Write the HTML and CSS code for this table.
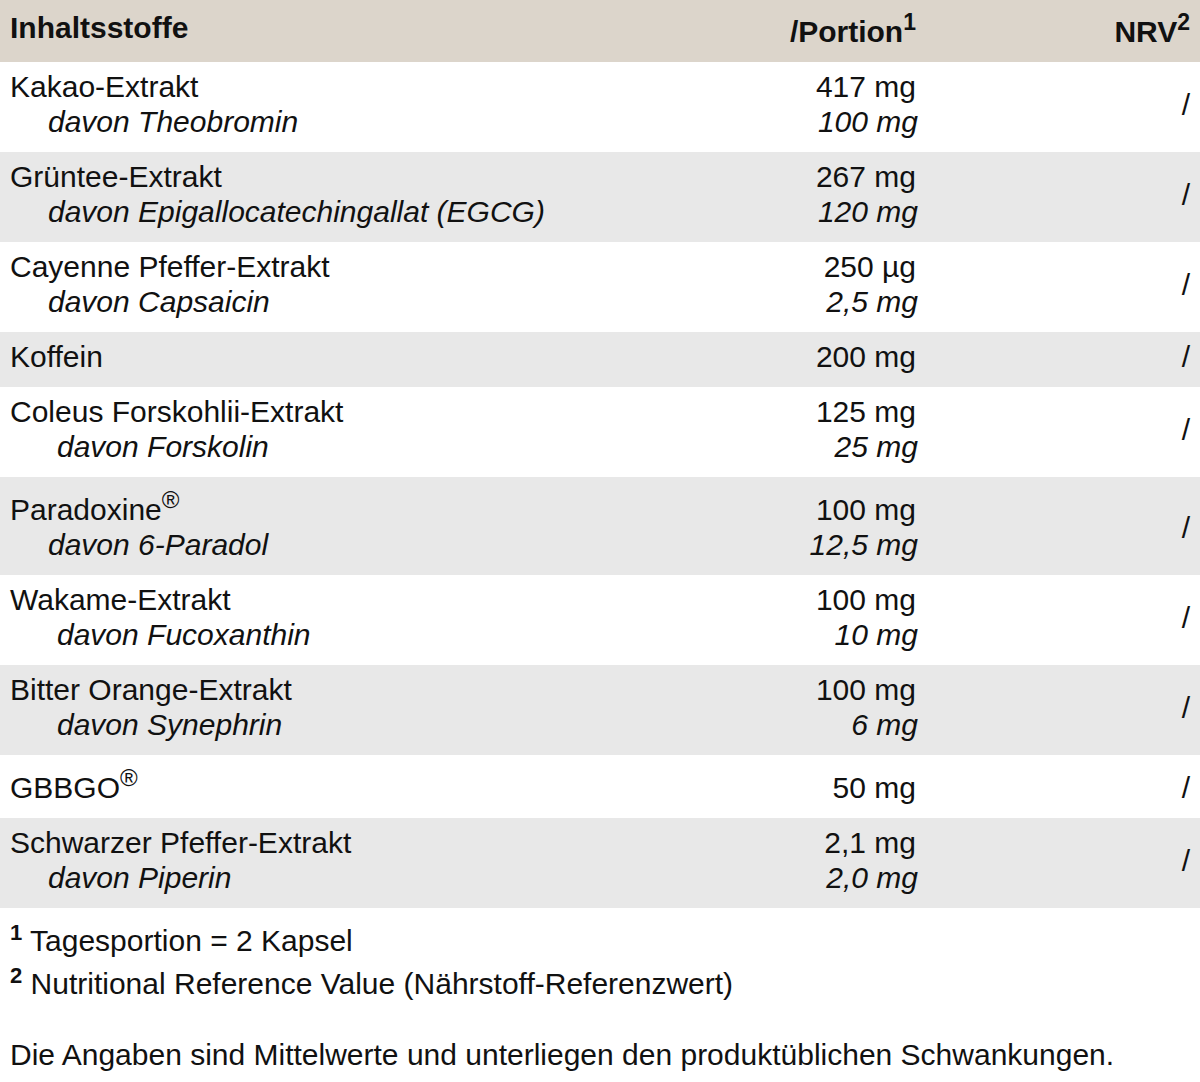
FILE: index.html
```html
<!DOCTYPE html>
<html lang="de">
<head>
<meta charset="utf-8">
<title>Inhaltsstoffe</title>
<link rel="stylesheet" href="styles.css">
</head>
<body>
<div class="table">
  <div class="row head">
    <div class="c name">Inhaltsstoffe</div>
    <div class="c val">/Portion<sup class="hs">1</sup></div>
    <div class="c nrv">NRV<sup class="hs">2</sup></div>
  </div>
  <div class="row">
    <div class="c name">Kakao-Extrakt<span class="sub i48">davon Theobromin</span></div>
    <div class="c val">417 mg<span class="sub">100 mg</span></div>
    <div class="c nrv">/</div>
  </div>
  <div class="row alt">
    <div class="c name">Grüntee-Extrakt<span class="sub i48">davon Epigallocatechingallat (EGCG)</span></div>
    <div class="c val">267 mg<span class="sub">120 mg</span></div>
    <div class="c nrv">/</div>
  </div>
  <div class="row">
    <div class="c name">Cayenne Pfeffer-Extrakt<span class="sub i48">davon Capsaicin</span></div>
    <div class="c val">250 µg<span class="sub">2,5 mg</span></div>
    <div class="c nrv">/</div>
  </div>
  <div class="row alt">
    <div class="c name">Koffein</div>
    <div class="c val">200 mg</div>
    <div class="c nrv">/</div>
  </div>
  <div class="row">
    <div class="c name">Coleus Forskohlii-Extrakt<span class="sub i57">davon Forskolin</span></div>
    <div class="c val">125 mg<span class="sub">25 mg</span></div>
    <div class="c nrv">/</div>
  </div>
  <div class="row alt tall">
    <div class="c name">Paradoxine<sup class="reg">®</sup><span class="sub i48">davon 6-Paradol</span></div>
    <div class="c val">100 mg<span class="sub">12,5 mg</span></div>
    <div class="c nrv">/</div>
  </div>
  <div class="row">
    <div class="c name">Wakame-Extrakt<span class="sub i57">davon Fucoxanthin</span></div>
    <div class="c val">100 mg<span class="sub">10 mg</span></div>
    <div class="c nrv">/</div>
  </div>
  <div class="row alt">
    <div class="c name">Bitter Orange-Extrakt<span class="sub i57">davon Synephrin</span></div>
    <div class="c val">100 mg<span class="sub">6 mg</span></div>
    <div class="c nrv">/</div>
  </div>
  <div class="row tall">
    <div class="c name">GBBGO<sup class="reg">®</sup></div>
    <div class="c val">50 mg</div>
    <div class="c nrv">/</div>
  </div>
  <div class="row alt">
    <div class="c name">Schwarzer Pfeffer-Extrakt<span class="sub i48">davon Piperin</span></div>
    <div class="c val">2,1 mg<span class="sub">2,0 mg</span></div>
    <div class="c nrv">/</div>
  </div>
</div>
<div class="notes">
  <p class="note"><sup class="fn">1</sup> Tagesportion = 2 Kapsel</p>
  <p class="note"><sup class="fn">2</sup> Nutritional Reference Value (Nährstoff-Referenzwert)</p>
  <p class="disclaimer">Die Angaben sind Mittelwerte und unterliegen den produktüblichen Schwankungen.</p>
</div>
</body>
</html>
```
FILE: styles.css
```css
html, body {
  margin: 0;
  padding: 0;
  background: #ffffff;
}
body {
  font-family: "Liberation Sans", Arial, Helvetica, sans-serif;
  font-size: 30px;
  line-height: 35px;
  color: #111111;
  width: 1200px;
}
.table {
  display: flex;
  flex-direction: column;
}
.row {
  display: grid;
  grid-template-columns: 1fr 300px 274px;
  padding: 7px 10px 13px 10px;
  background: #ffffff;
}
.row.tall {
  padding-top: 15px;
}
.row.alt {
  background: #e8e8e8;
}
.row.head {
  background: #dcd5cb;
  font-weight: bold;
  padding: 10px 10px 13px 10px;
}
.c {
  display: flex;
  flex-direction: column;
}
.name {
  display: block;
}
.val {
  display: block;
  text-align: right;
}
.nrv {
  text-align: right;
  justify-content: center;
  display: flex;
  align-items: flex-end;
}
.head .nrv, .head .val {
  display: block;
  padding-top: 4px;
}
.sub {
  display: block;
  font-style: italic;
}
.val .sub {
  margin-right: -2px;
}
.i48 { padding-left: 38px; }
.i57 { padding-left: 47px; }
sup {
  line-height: 0;
}
.hs {
  font-size: 23px;
  vertical-align: 12px;
}
.reg {
  font-size: 24px;
  vertical-align: 12px;
}
.notes {
  padding: 11px 10px 0 10px;
}
.note {
  margin: 0;
  line-height: 43px;
}
.fn {
  font-size: 22px;
  font-weight: bold;
  vertical-align: 11px;
}
.disclaimer {
  margin: 28px 0 0 0;
  line-height: 43px;
}
```
